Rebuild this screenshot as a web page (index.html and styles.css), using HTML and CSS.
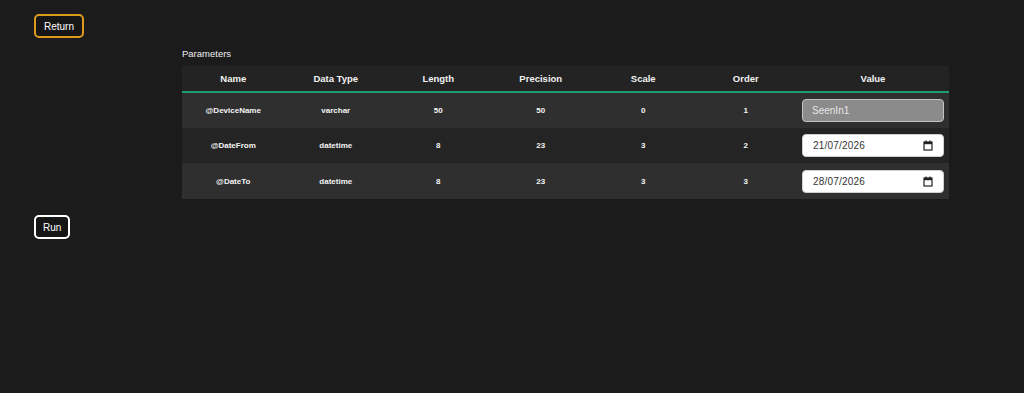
FILE: index.html
```html
<!DOCTYPE html>
<html lang="en-GB">
<head>
  <meta charset="UTF-8" />
  <meta name="viewport" content="width=device-width, initial-scale=1.0"/>
  <title>Run procedure</title>
  <link rel="stylesheet" href="styles.css">
</head>
<body>
  <button class="btn btn-return">Return</button>

  <div class="params">
    <div class="params-title">Parameters</div>
    <table class="params-table">
      <thead>
        <tr>
          <th>Name</th>
          <th>Data Type</th>
          <th>Length</th>
          <th>Precision</th>
          <th>Scale</th>
          <th>Order</th>
          <th class="col-value">Value</th>
        </tr>
      </thead>
      <tbody>
        <tr>
          <td>@DeviceName</td>
          <td>varchar</td>
          <td>50</td>
          <td>50</td>
          <td>0</td>
          <td>1</td>
          <td class="col-value"><input class="field field-disabled" type="text" value="SeenIn1" disabled></td>
        </tr>
        <tr>
          <td>@DateFrom</td>
          <td>datetime</td>
          <td>8</td>
          <td>23</td>
          <td>3</td>
          <td>2</td>
          <td class="col-value">
            <div class="field date-field">
              <input type="text" value="21/07/2026">
              <svg class="cal" width="10" height="11" viewBox="0 0 10 11"><path d="M3 0.5v2M7 0.5v2" stroke="#222" stroke-width="1.3"/><rect x="1" y="2" width="8" height="8" fill="none" stroke="#222" stroke-width="1.2"/><rect x="1" y="2" width="8" height="2.2" fill="#222"/></svg>
            </div>
          </td>
        </tr>
        <tr>
          <td>@DateTo</td>
          <td>datetime</td>
          <td>8</td>
          <td>23</td>
          <td>3</td>
          <td>3</td>
          <td class="col-value">
            <div class="field date-field">
              <input type="text" value="28/07/2026">
              <svg class="cal" width="10" height="11" viewBox="0 0 10 11"><path d="M3 0.5v2M7 0.5v2" stroke="#222" stroke-width="1.3"/><rect x="1" y="2" width="8" height="8" fill="none" stroke="#222" stroke-width="1.2"/><rect x="1" y="2" width="8" height="2.2" fill="#222"/></svg>
            </div>
          </td>
        </tr>
      </tbody>
    </table>
  </div>

  <button class="btn btn-run">Run</button>
</body>
</html>
```

FILE: styles.css
```css
body {
  font-family: 'Liberation Sans', Arial, sans-serif;
  background: #1b1b1b;
  color: #fff;
  margin: 0;
  padding: 14px 34px;
}

.btn {
  display: block;
  background: #161616;
  color: #fff;
  font-family: inherit;
  font-size: 10px;
  height: 24px;
  padding: 0 8px;
  border-radius: 5px;
  border: 2px solid #fff;
  cursor: pointer;
}

.btn-return {
  border-color: #dc9a1c;
}

.btn-run {
  margin-top: 16px;
  padding: 0 7px;
}

.params {
  margin-left: 148px;
  width: 767px;
}

.params-title {
  font-size: 9.5px;
  color: #eee;
  margin: 10px 0 6px;
  line-height: 12px;
}

.params-table {
  width: 100%;
  border-collapse: collapse;
  table-layout: fixed;
}

.params-table th,
.params-table td {
  width: 102.5px;
  text-align: center;
  padding: 0;
}

.params-table .col-value {
  width: 152px;
}

.params-table th {
  background: #232323;
  font-size: 9.5px;
  font-weight: bold;
  color: #f2f2f2;
  height: 25px;
  border-bottom: 2px solid #1f9c6c;
}

.params-table td {
  font-size: 8px;
  font-weight: bold;
  color: #f4f4f4;
  height: 35px;
}

.params-table tbody tr:nth-child(odd) td {
  background: #2f2f2f;
}

.params-table tbody tr:nth-child(even) td {
  background: #242424;
}

.params-table tbody tr:last-child td {
  height: 36px;
}

.field {
  box-sizing: border-box;
  width: 142px;
  height: 23px;
  margin: 0 auto;
  border-radius: 4px;
  font-family: inherit;
  font-size: 10px;
  text-align: left;
}

.field-disabled {
  display: block;
  background: #8b8b8b;
  border: 1px solid #c4c4c4;
  color: #e6e6e6;
  padding: 0 9px;
}

.date-field {
  display: flex;
  align-items: center;
  background: #fff;
  border: 1px solid #d0d0d0;
  padding: 0 10px 0 10px;
}

.date-field input {
  flex: 1;
  min-width: 0;
  border: none;
  outline: none;
  background: transparent;
  font-family: inherit;
  font-size: 10px;
  color: #333;
  padding: 0;
  letter-spacing: 0.2px;
}

.cal {
  flex-shrink: 0;
}
```
